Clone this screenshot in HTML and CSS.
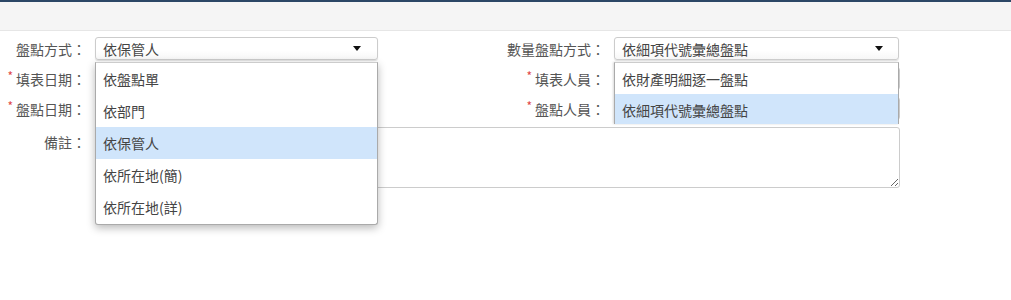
FILE: index.html
```html
<!DOCTYPE html>
<html lang="zh-Hant">
<head>
    <meta charset="UTF-8">
    <meta name="viewport" content="width=device-width, initial-scale=1.0">
    <title>盤點設定</title>
    <link rel="stylesheet" href="styles.css">
</head>
<body>
    <div class="topbar"></div>
    <div class="toolbar"></div>

    <form class="form">
        <label class="lbl">盤點方式：</label>
        <div class="field">
            <div class="select"><span>依保管人</span><i class="arrow"></i></div>
            <ul class="options">
                <li>依盤點單</li>
                <li>依部門</li>
                <li class="active">依保管人</li>
                <li>依所在地(簡)</li>
                <li>依所在地(詳)</li>
            </ul>
        </div>

        <label class="lbl">數量盤點方式：</label>
        <div class="field">
            <div class="select wide"><span>依細項代號彙總盤點</span><i class="arrow"></i></div>
            <ul class="options wide clipped">
                <li>依財產明細逐一盤點</li>
                <li class="active">依細項代號彙總盤點</li>
            </ul>
        </div>

        <label class="lbl"><em>*</em>填表日期：</label>
        <input class="input" type="text">
        <label class="lbl"><em>*</em>填表人員：</label>
        <input class="input" type="text">

        <label class="lbl"><em>*</em>盤點日期：</label>
        <input class="input" type="text">
        <label class="lbl"><em>*</em>盤點人員：</label>
        <input class="input" type="text">

        <label class="lbl memo-lbl">備註：</label>
        <textarea class="memo"></textarea>
    </form>
</body>
</html>
```

FILE: styles.css
```css
/* 版面基本設定 */
html, body {
    min-height: 300px;
}

body {
    margin: 0;
    background: #fff;
    color: #555;
    font-family: "Noto Sans CJK TC", "Noto Sans", sans-serif;
    font-size: 14px;
}

.topbar {
    height: 2px;
    background: #2c4766;
}

.toolbar {
    height: 28px;
    background: #f5f5f5;
    border-bottom: 1px solid #e6e6e6;
}

/* 表單欄位 */
.form {
    display: grid;
    grid-template-columns: 86px 283px 218px 286px;
    grid-template-rows: 23px 23px 23px 61px;
    column-gap: 9px;
    row-gap: 7px;
    padding-top: 6px;
    padding-bottom: 110px;
}

.lbl {
    display: flex;
    align-items: center;
    justify-content: flex-end;
    line-height: 1;
    white-space: nowrap;
}

.lbl em {
    color: #e04848;
    font-style: normal;
    font-size: 12px;
    align-self: flex-start;
    margin-top: 3px;
    margin-right: 3px;
}

.memo-lbl {
    align-items: flex-start;
    padding-top: 8px;
}

.field {
    position: relative;
}

.select {
    box-sizing: border-box;
    height: 23px;
    width: 283px;
    display: flex;
    align-items: center;
    justify-content: space-between;
    padding: 0 16px 0 7px;
    border: 1px solid #ccc;
    border-radius: 3px;
    background: linear-gradient(#fff 60%, #f7f7f7);
    box-shadow: 0 1px 1px rgba(0, 0, 0, 0.12);
    color: #444;
    line-height: 1;
}

.select.wide {
    width: 285px;
    padding-right: 15px;
    padding-left: 7px;
}

.arrow {
    width: 0;
    height: 0;
    border-left: 4px solid transparent;
    border-right: 4px solid transparent;
    border-top: 5px solid #111;
}

.input {
    box-sizing: border-box;
    height: 23px;
    width: 100%;
    margin: 0;
    border: 1px solid #ccc;
    border-radius: 3px;
}

.memo {
    grid-column: 2 / 5;
    height: 61px;
    box-sizing: border-box;
    margin: 0;
    border: 1px solid #ccc;
    border-radius: 3px;
}

/* 下拉選單 */
.options {
    position: absolute;
    z-index: 10;
    top: 25px;
    left: 0;
    width: 283px;
    box-sizing: border-box;
    margin: 0;
    padding: 0 0 1px;
    list-style: none;
    background: #fff;
    border: 1px solid #aaa;
    border-top-color: #ccc;
    border-radius: 0 0 3px 3px;
    box-shadow: 0 3px 8px rgba(0, 0, 0, 0.28);
}

.options li {
    height: 32px;
    display: flex;
    align-items: center;
    padding-left: 7px;
    color: #444;
    line-height: 1;
}

.options li.active {
    background: #d0e5fb;
}

.options.wide {
    width: 285px;
    height: 62px;
    padding: 0;
    overflow: hidden;
    border-bottom: none;
    border-radius: 0;
    box-shadow: -1px 0 2px rgba(0, 0, 0, 0.15);
}

.options.wide li {
    height: 31px;
}
```
